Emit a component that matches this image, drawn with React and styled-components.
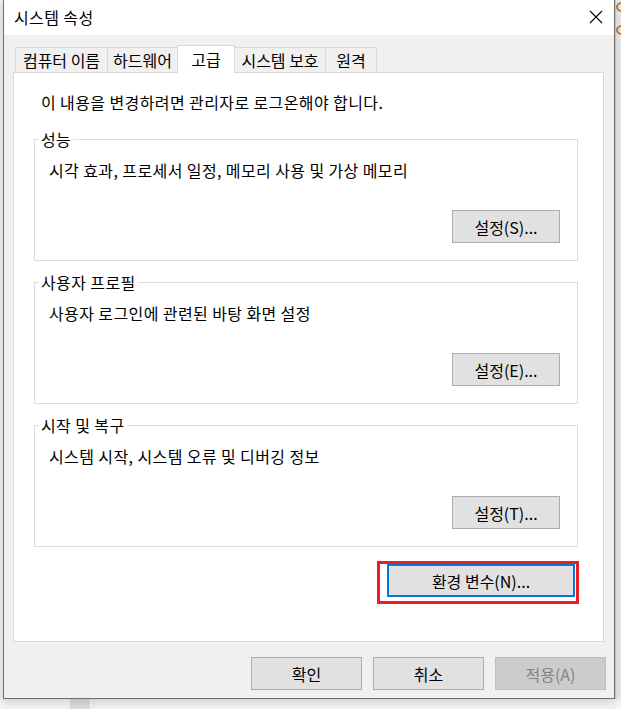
import React from 'react';
import styled, { createGlobalStyle } from 'styled-components';

const GlobalStyle = createGlobalStyle`
  html, body {
    margin: 0;
    padding: 0;
  }
  body {
    width: 621px;
    height: 709px;
    overflow: hidden;
    background: #f2f2f2;
    font-family: "Noto Sans CJK KR", "Noto Sans", sans-serif;
    font-size: 16px;
    letter-spacing: 0.4px;
    color: #000;
  }
`;

const Screen = styled.div`
  width: 621px;
  height: 709px;
  display: flex;
  flex-direction: column;
`;

const TopArea = styled.div`
  display: flex;
  height: 699px;
`;

const LeftGap = styled.div`
  flex: none;
  width: 3px;
  background: #f0f0f0;
`;

const Window = styled.div`
  position: relative;
  z-index: 1;
  flex: none;
  width: 612px;
  height: 699px;
  box-sizing: border-box;
  border: 1px solid #707070;
  border-top: none;
  background: #f0f0f0;
  display: flex;
  flex-direction: column;
  box-shadow: 0 3px 9px rgba(0, 0, 0, 0.16);
`;

const TitleBar = styled.div`
  height: 35px;
  flex: none;
  background: #fff;
  display: flex;
  align-items: center;
  justify-content: space-between;
  padding: 0 11px 2px 10px;
  box-sizing: border-box;
`;

const Title = styled.span`
  line-height: 20px;
`;

const CloseIcon = styled.svg`
  width: 14px;
  height: 14px;
  display: block;
`;

const Body = styled.div`
  flex: 1;
  display: flex;
  flex-direction: column;
  padding: 10px 10px 0 9px;
`;

const TabRow = styled.div`
  display: flex;
  align-items: flex-end;
  height: 28px;
  padding-left: 2px;
  margin-bottom: -1px;
  position: relative;
  z-index: 2;
`;

const Tab = styled.div`
  box-sizing: border-box;
  width: ${(p) => p.$w}px;
  height: ${(p) => (p.$active ? 28 : 25)}px;
  margin-left: ${(p) => (p.$first ? 0 : -1)}px;
  margin-bottom: ${(p) => (p.$active ? 0 : 1)}px;
  padding-bottom: ${(p) => (p.$active ? 2 : 0)}px;
  border: 1px solid #d9d9d9;
  border-bottom: none;
  background: ${(p) => (p.$active ? '#fff' : '#f0f0f0')};
  position: relative;
  z-index: ${(p) => (p.$active ? 2 : 1)};
  display: flex;
  align-items: center;
  justify-content: center;
  line-height: 20px;
  letter-spacing: 0;
  white-space: nowrap;
`;

const Panel = styled.div`
  width: 591px;
  height: 570px;
  box-sizing: border-box;
  background: #fff;
  border: 1px solid #d9d9d9;
  display: flex;
  flex-direction: column;
`;

const Intro = styled.div`
  margin: 19px 0 0 27px;
  line-height: 20px;
`;

const Group = styled.fieldset`
  width: 544px;
  box-sizing: border-box;
  margin: ${(p) => (p.$first ? 17 : 11)}px 0 0 20px;
  padding: 0 17px 17px 14px;
  border: 1px solid #dcdcdc;
  display: flex;
  flex-direction: column;
  min-inline-size: 0;
`;

const Legend = styled.legend`
  margin-left: -10px;
  padding: 0 2px;
  line-height: 20px;
`;

const Description = styled.div`
  margin-top: 11px;
  line-height: 20px;
`;

const ButtonRow = styled.div`
  display: flex;
  justify-content: flex-end;
  margin-top: 30px;
`;

const Button = styled.button`
  width: ${(p) => p.$w || 108}px;
  height: 33px;
  box-sizing: border-box;
  padding: 0;
  font-family: inherit;
  font-size: 16px;
  letter-spacing: 0;
  line-height: 20px;
  color: ${(p) => (p.disabled ? '#838383' : '#000')};
  background: ${(p) => (p.disabled ? '#cccccc' : '#e1e1e1')};
  border: ${(p) => (p.$focused ? '2px solid #0078d7' : `1px solid ${p.disabled ? '#bfbfbf' : '#adadad'}`)};
`;

const Annotation = styled.div`
  align-self: flex-end;
  margin: 14px 24px 0 0;
  width: 202px;
  height: 43px;
  box-sizing: border-box;
  border: 3px solid #ec1c24;
  padding: 0 0 3px 7px;
  display: flex;
`;

const Footer = styled.div`
  display: flex;
  justify-content: flex-end;
  gap: 11px;
  margin: 15px -2px 0 0;
`;

const RightStrip = styled.div`
  flex: 1;
  min-width: 0;
  overflow: hidden;
  background: #e9e9e9;
  border-left: 1px solid #d0d0d0;
  display: flex;
  flex-direction: column;
  gap: 13px;
  padding-top: 2px;
`;

const StripIcon = styled.div`
  flex: none;
  width: 12px;
  height: 10px;
  border-radius: 50%;
  border: 2px solid #c07a3a;
  box-sizing: border-box;
`;

const BottomStrip = styled.div`
  height: 10px;
  display: flex;
  background: #f4f4f4;
`;

const StripBlock = styled.div`
  margin-left: ${(p) => p.$left}px;
  width: ${(p) => p.$w}px;
  background: ${(p) => p.$bg};
`;

const tabs = [
  { label: '컴퓨터 이름', w: 93 },
  { label: '하드웨어', w: 71 },
  { label: '고급', w: 58, active: true },
  { label: '시스템 보호', w: 92 },
  { label: '원격', w: 52 },
];

const groups = [
  { title: '성능', text: '시각 효과, 프로세서 일정, 메모리 사용 및 가상 메모리', button: '설정(S)...' },
  { title: '사용자 프로필', text: '사용자 로그인에 관련된 바탕 화면 설정', button: '설정(E)...' },
  { title: '시작 및 복구', text: '시스템 시작, 시스템 오류 및 디버깅 정보', button: '설정(T)...' },
];

export default function App() {
  return (
    <Screen>
      <GlobalStyle />
      <TopArea>
        <LeftGap />
        <Window>
          <TitleBar>
            <Title>시스템 속성</Title>
            <CloseIcon viewBox="0 0 14 14">
              <path d="M1 1 L13 13 M13 1 L1 13" stroke="#000" strokeWidth="1.1" fill="none" />
            </CloseIcon>
          </TitleBar>
          <Body>
            <TabRow>
              {tabs.map((t, i) => (
                <Tab key={t.label} $w={t.w} $active={t.active} $first={i === 0}>
                  {t.label}
                </Tab>
              ))}
            </TabRow>
            <Panel>
              <Intro>이 내용을 변경하려면 관리자로 로그온해야 합니다.</Intro>
              {groups.map((g, i) => (
                <Group key={g.title} $first={i === 0}>
                  <Legend>{g.title}</Legend>
                  <Description>{g.text}</Description>
                  <ButtonRow>
                    <Button>{g.button}</Button>
                  </ButtonRow>
                </Group>
              ))}
              <Annotation>
                <Button $w={188} $focused>환경 변수(N)...</Button>
              </Annotation>
            </Panel>
            <Footer>
              <Button $w={111}>확인</Button>
              <Button $w={111}>취소</Button>
              <Button $w={111} disabled>적용(A)</Button>
            </Footer>
          </Body>
        </Window>
        <RightStrip>
          <StripIcon />
          <StripIcon />
        </RightStrip>
      </TopArea>
      <BottomStrip>
        <StripBlock $left={70} $w={20} $bg="#dcdcdc" />
        <StripBlock $left={3} $w={1} $bg="#e4e4e4" />
      </BottomStrip>
    </Screen>
  );
}
